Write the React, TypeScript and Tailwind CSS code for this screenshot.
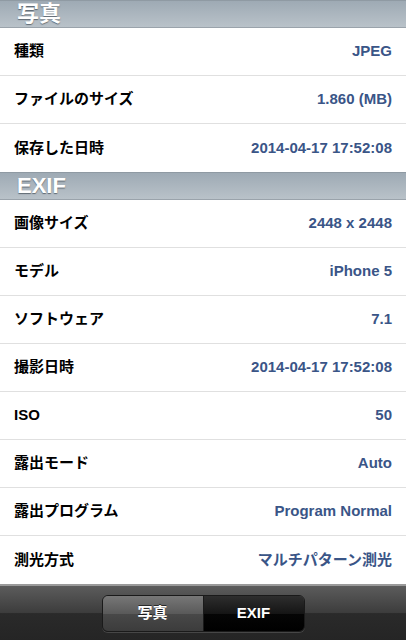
import React from 'react'

type Row = { label: string; value: string }

const photoRows: Row[] = [
  { label: '種類', value: 'JPEG' },
  { label: 'ファイルのサイズ', value: '1.860 (MB)' },
  { label: '保存した日時', value: '2014-04-17 17:52:08' },
]

const exifRows: Row[] = [
  { label: '画像サイズ', value: '2448 x 2448' },
  { label: 'モデル', value: 'iPhone 5' },
  { label: 'ソフトウェア', value: '7.1' },
  { label: '撮影日時', value: '2014-04-17 17:52:08' },
  { label: 'ISO', value: '50' },
  { label: '露出モード', value: 'Auto' },
  { label: '露出プログラム', value: 'Program Normal' },
  { label: '測光方式', value: 'マルチパターン測光' },
]

const font = "font-['Liberation_Sans','Noto_Sans_CJK_JP',sans-serif]"

function SectionHeader({ title }: { title: string }) {
  return (
    <div className="h-[28px] flex items-center px-[17px] border-t border-t-[#8f9aa3] border-b border-b-[#9aa3ab] bg-gradient-to-b from-[#9eaab4] to-[#b9c2c9]">
      <span className="text-white text-[22px] font-bold leading-none [text-shadow:0_1px_1px_rgba(60,70,80,0.7)]">
        {title}
      </span>
    </div>
  )
}

function InfoRow({ row, last }: { row: Row; last?: boolean }) {
  return (
    <div className={`h-[48px] flex items-center justify-between px-[14px] bg-white ${last ? '' : 'border-b border-[#e0e0e0]'}`}>
      <span className="text-[15px] font-bold text-black">{row.label}</span>
      <span className="text-[15px] font-bold text-[#3a5587]">{row.value}</span>
    </div>
  )
}

export default function App() {
  return (
    <div className={`w-[406px] h-[640px] flex flex-col bg-white overflow-hidden ${font}`}>
      <SectionHeader title="写真" />
      {photoRows.map((r, i) => (
        <InfoRow key={r.label} row={r} last={i === photoRows.length - 1} />
      ))}
      <SectionHeader title="EXIF" />
      {exifRows.map((r, i) => (
        <InfoRow key={r.label} row={r} last={i === exifRows.length - 1} />
      ))}

      {/* ツールバー */}
      <div className="flex-1 flex items-center justify-center border-t-2 border-[#9a9a9a] bg-[linear-gradient(to_bottom,#5c5c5c_0%,#3c3c3c_50%,#2a2a2a_51%,#252525_100%)]">
        <div className="flex w-[203px] h-[37px] rounded-[6px] border border-[#1a1a1a] overflow-hidden shadow-[0_1px_0_rgba(255,255,255,0.15)]">
          <div className="flex-1 flex items-center justify-center bg-[linear-gradient(to_bottom,#777_0%,#5a5a5a_50%,#484848_51%,#3c3c3c_100%)] border-r border-[#1a1a1a]">
            <span className="text-white text-[15px] font-bold [text-shadow:0_-1px_0_rgba(0,0,0,0.6)]">写真</span>
          </div>
          <div className="flex-1 flex items-center justify-center bg-[linear-gradient(to_bottom,#2e2e2e_0%,#151515_50%,#050505_51%,#000_100%)]">
            <span className="text-white text-[15px] font-bold">EXIF</span>
          </div>
        </div>
      </div>
    </div>
  )
}
